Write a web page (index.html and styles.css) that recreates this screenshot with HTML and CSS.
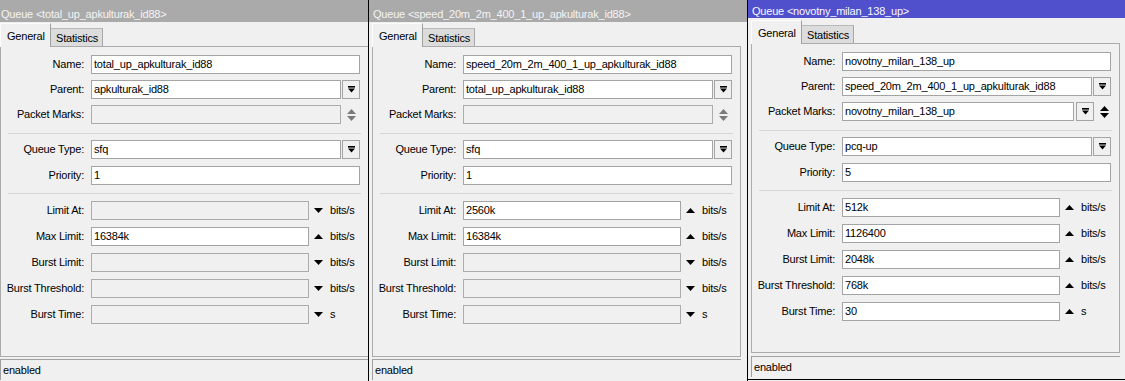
FILE: index.html
```html
<!DOCTYPE html>
<html>
<head>
<meta charset="utf-8">
<link rel="stylesheet" href="styles.css">
</head>
<body>
<div class="desk">

  <section class="win win-a">
    <header class="title">Queue &lt;total_up_apkulturak_id88&gt;</header>
    <nav class="tabs"><span class="tab active">General</span><span class="tab">Statistics</span></nav>
    <div class="panel">
      <div class="grp grp-a">
        <div class="row"><span class="lbl">Name:</span><span class="fld w-full">total_up_apkulturak_id88</span></div>
        <div class="row"><span class="lbl">Parent:</span><span class="fld w-combo">apkulturak_id88</span><span class="btn"><svg width="7" height="7" viewBox="0 0 7 7"><rect x="0" y="0" width="7" height="1.6"/><path d="M0 2.6H7L3.5 6.6Z"/></svg></span></div>
        <div class="row"><span class="lbl">Packet Marks:</span><span class="fld w-combo off"></span><span class="spin gray"><svg width="9" height="12" viewBox="0 0 9 12"><path d="M4.5 0L9 5H0Z"/><path d="M0 7H9L4.5 12Z"/></svg></span></div>
      </div>
      <div class="sep sep-1"></div>
      <div class="grp grp-b">
        <div class="row"><span class="lbl">Queue Type:</span><span class="fld w-combo">sfq</span><span class="btn"><svg width="7" height="7" viewBox="0 0 7 7"><rect x="0" y="0" width="7" height="1.6"/><path d="M0 2.6H7L3.5 6.6Z"/></svg></span></div>
        <div class="row"><span class="lbl">Priority:</span><span class="fld w-full">1</span></div>
      </div>
      <div class="sep sep-2"></div>
      <div class="grp grp-c">
        <div class="row"><span class="lbl">Limit At:</span><span class="fld w-lim off"></span><span class="arr"><svg width="9" height="5" viewBox="0 0 9 5"><path d="M0 0H9L4.5 5Z"/></svg></span><span class="unit">bits/s</span></div>
        <div class="row"><span class="lbl">Max Limit:</span><span class="fld w-lim">16384k</span><span class="arr"><svg width="9" height="5" viewBox="0 0 9 5"><path d="M4.5 0L9 5H0Z"/></svg></span><span class="unit">bits/s</span></div>
        <div class="row"><span class="lbl">Burst Limit:</span><span class="fld w-lim off"></span><span class="arr"><svg width="9" height="5" viewBox="0 0 9 5"><path d="M0 0H9L4.5 5Z"/></svg></span><span class="unit">bits/s</span></div>
        <div class="row"><span class="lbl">Burst Threshold:</span><span class="fld w-lim off"></span><span class="arr"><svg width="9" height="5" viewBox="0 0 9 5"><path d="M0 0H9L4.5 5Z"/></svg></span><span class="unit">bits/s</span></div>
        <div class="row"><span class="lbl">Burst Time:</span><span class="fld w-lim off"></span><span class="arr"><svg width="9" height="5" viewBox="0 0 9 5"><path d="M0 0H9L4.5 5Z"/></svg></span><span class="unit">s</span></div>
      </div>
    </div>
    <div class="status">enabled</div>
  </section>

  <section class="win win-b">
    <header class="title">Queue &lt;speed_20m_2m_400_1_up_apkulturak_id88&gt;</header>
    <nav class="tabs"><span class="tab active">General</span><span class="tab">Statistics</span></nav>
    <div class="panel">
      <div class="grp grp-a">
        <div class="row"><span class="lbl">Name:</span><span class="fld w-full">speed_20m_2m_400_1_up_apkulturak_id88</span></div>
        <div class="row"><span class="lbl">Parent:</span><span class="fld w-combo">total_up_apkulturak_id88</span><span class="btn"><svg width="7" height="7" viewBox="0 0 7 7"><rect x="0" y="0" width="7" height="1.6"/><path d="M0 2.6H7L3.5 6.6Z"/></svg></span></div>
        <div class="row"><span class="lbl">Packet Marks:</span><span class="fld w-combo off"></span><span class="spin gray"><svg width="9" height="12" viewBox="0 0 9 12"><path d="M4.5 0L9 5H0Z"/><path d="M0 7H9L4.5 12Z"/></svg></span></div>
      </div>
      <div class="sep sep-1"></div>
      <div class="grp grp-b">
        <div class="row"><span class="lbl">Queue Type:</span><span class="fld w-combo">sfq</span><span class="btn"><svg width="7" height="7" viewBox="0 0 7 7"><rect x="0" y="0" width="7" height="1.6"/><path d="M0 2.6H7L3.5 6.6Z"/></svg></span></div>
        <div class="row"><span class="lbl">Priority:</span><span class="fld w-full">1</span></div>
      </div>
      <div class="sep sep-2"></div>
      <div class="grp grp-c">
        <div class="row"><span class="lbl">Limit At:</span><span class="fld w-lim">2560k</span><span class="arr"><svg width="9" height="5" viewBox="0 0 9 5"><path d="M4.5 0L9 5H0Z"/></svg></span><span class="unit">bits/s</span></div>
        <div class="row"><span class="lbl">Max Limit:</span><span class="fld w-lim">16384k</span><span class="arr"><svg width="9" height="5" viewBox="0 0 9 5"><path d="M4.5 0L9 5H0Z"/></svg></span><span class="unit">bits/s</span></div>
        <div class="row"><span class="lbl">Burst Limit:</span><span class="fld w-lim off"></span><span class="arr"><svg width="9" height="5" viewBox="0 0 9 5"><path d="M0 0H9L4.5 5Z"/></svg></span><span class="unit">bits/s</span></div>
        <div class="row"><span class="lbl">Burst Threshold:</span><span class="fld w-lim off"></span><span class="arr"><svg width="9" height="5" viewBox="0 0 9 5"><path d="M0 0H9L4.5 5Z"/></svg></span><span class="unit">bits/s</span></div>
        <div class="row"><span class="lbl">Burst Time:</span><span class="fld w-lim off"></span><span class="arr"><svg width="9" height="5" viewBox="0 0 9 5"><path d="M0 0H9L4.5 5Z"/></svg></span><span class="unit">s</span></div>
      </div>
    </div>
    <div class="status">enabled</div>
  </section>

  <section class="win win-c">
    <header class="title">Queue &lt;novotny_milan_138_up&gt;</header>
    <nav class="tabs"><span class="tab active">General</span><span class="tab">Statistics</span></nav>
    <div class="panel">
      <div class="grp grp-a">
        <div class="row"><span class="lbl">Name:</span><span class="fld w-full">novotny_milan_138_up</span></div>
        <div class="row"><span class="lbl">Parent:</span><span class="fld w-combo">speed_20m_2m_400_1_up_apkulturak_id88</span><span class="btn"><svg width="7" height="7" viewBox="0 0 7 7"><rect x="0" y="0" width="7" height="1.6"/><path d="M0 2.6H7L3.5 6.6Z"/></svg></span></div>
        <div class="row"><span class="lbl">Packet Marks:</span><span class="fld w-pm">novotny_milan_138_up</span><span class="btn btn-pm"><svg width="7" height="7" viewBox="0 0 7 7"><rect x="0" y="0" width="7" height="1.6"/><path d="M0 2.6H7L3.5 6.6Z"/></svg></span><span class="spin spin-pm"><svg width="9" height="12" viewBox="0 0 9 12"><path d="M4.5 0L9 5H0Z"/><path d="M0 7H9L4.5 12Z"/></svg></span></div>
      </div>
      <div class="sep sep-1"></div>
      <div class="grp grp-b">
        <div class="row"><span class="lbl">Queue Type:</span><span class="fld w-combo">pcq-up</span><span class="btn"><svg width="7" height="7" viewBox="0 0 7 7"><rect x="0" y="0" width="7" height="1.6"/><path d="M0 2.6H7L3.5 6.6Z"/></svg></span></div>
        <div class="row"><span class="lbl">Priority:</span><span class="fld w-full">5</span></div>
      </div>
      <div class="sep sep-2"></div>
      <div class="grp grp-c">
        <div class="row"><span class="lbl">Limit At:</span><span class="fld w-lim">512k</span><span class="arr"><svg width="9" height="5" viewBox="0 0 9 5"><path d="M4.5 0L9 5H0Z"/></svg></span><span class="unit">bits/s</span></div>
        <div class="row"><span class="lbl">Max Limit:</span><span class="fld w-lim">1126400</span><span class="arr"><svg width="9" height="5" viewBox="0 0 9 5"><path d="M4.5 0L9 5H0Z"/></svg></span><span class="unit">bits/s</span></div>
        <div class="row"><span class="lbl">Burst Limit:</span><span class="fld w-lim">2048k</span><span class="arr"><svg width="9" height="5" viewBox="0 0 9 5"><path d="M4.5 0L9 5H0Z"/></svg></span><span class="unit">bits/s</span></div>
        <div class="row"><span class="lbl">Burst Threshold:</span><span class="fld w-lim">768k</span><span class="arr"><svg width="9" height="5" viewBox="0 0 9 5"><path d="M4.5 0L9 5H0Z"/></svg></span><span class="unit">bits/s</span></div>
        <div class="row"><span class="lbl">Burst Time:</span><span class="fld w-lim">30</span><span class="arr"><svg width="9" height="5" viewBox="0 0 9 5"><path d="M4.5 0L9 5H0Z"/></svg></span><span class="unit">s</span></div>
      </div>
    </div>
    <div class="status">enabled</div>
  </section>

</div>
</body>
</html>
```

FILE: styles.css
```css
* { box-sizing: border-box; }

html, body {
  margin: 0;
  padding: 0;
}

body {
  width: 1125px;
  height: 381px;
  overflow: hidden;
  background: #f0f0f0;
  font-family: "Liberation Sans", Arial, sans-serif;
  font-size: 11px;
  letter-spacing: -0.2px;
  color: #000;
}

.desk {
  position: relative;
  width: 1125px;
  height: 381px;
  overflow: hidden;
}

/* windows on a desktop */
.win {
  position: absolute;
  top: 0;
  width: 380px;
  height: 420px;
  background: #f0f0f0;
  border-left: 1px solid #000;
  border-right: 1px solid #000;
  display: flex;
  flex-direction: column;
}

.win-a { left: -4px; z-index: 1; }
.win-b { left: 368px; z-index: 2; }
.win-c {
  left: 747px;
  z-index: 3;
  height: 380px;
  border-bottom: 1px solid #000;
}

.title {
  flex: none;
  height: 22px;
  padding: 7px 0 0 4px;
  line-height: 15px;
  background: #aaaaaa;
  color: #f4f4f4;
  white-space: nowrap;
  overflow: hidden;
}

.win-c .title {
  height: 18px;
  padding-top: 4px;
  background: #5050cc;
  color: #f8f8ff;
}

.tabs {
  flex: none;
  height: 24px;
  padding-left: 3px;
  display: flex;
  align-items: flex-end;
}

.win-c .tabs { height: 25px; }

.tab {
  height: 18px;
  width: 52px;
  padding: 3px 0 0 5px;
  line-height: 13px;
  background: #dcdcdc;
  border-top: 1px solid #b8b8b8;
  border-right: 1px solid #a8a8a8;
  white-space: nowrap;
}

.tab.active {
  position: relative;
  z-index: 1;
  width: 51px;
  height: 24px;
  margin-bottom: -1px;
  padding: 6px 0 0 6px;
  background: #f0f0f0;
  border-top: 1px solid #fcfcfc;
  border-left: 1px solid #fcfcfc;
  border-right: 1px solid #a0a0a0;
}

.panel {
  flex: none;
  height: 311px;
  margin-left: 3px;
  width: 369px;
  border: 1px solid #ababab;
  padding-top: 8px;
  display: flex;
  flex-direction: column;
}

.win-c .panel { height: 310px; }

.grp {
  display: flex;
  flex-direction: column;
}

.grp-a { gap: 6px; }
.grp-b { gap: 7px; }
.grp-c { gap: 7px; }

.sep {
  height: 1px;
  margin-left: 7px;
  margin-right: 7px;
  background: #d6d6d6;
}

.sep-1 { margin-top: 9px; margin-bottom: 6px; }
.sep-2 { margin-top: 8px; margin-bottom: 7px; }

.row {
  display: flex;
  align-items: center;
  height: 19px;
}

.lbl {
  flex: none;
  width: 83px;
  margin-right: 7px;
  text-align: right;
  line-height: 19px;
  white-space: nowrap;
}

.fld {
  flex: none;
  height: 19px;
  padding-left: 2px;
  line-height: 17px;
  background: #fff;
  border: 1px solid #a4a4a4;
  white-space: nowrap;
  overflow: hidden;
}

.fld.off {
  background: #f0f0f0;
  border-color: #acacac;
}

.w-full { width: 269px; }
.w-combo { width: 250px; }
.w-lim { width: 218px; }
.w-pm { width: 232px; }

.btn {
  flex: none;
  width: 18px;
  height: 19px;
  margin-left: 1px;
  border: 1px solid #a4a4a4;
  background: #f0f0f0;
  display: flex;
  align-items: center;
  justify-content: center;
}

.btn svg { fill: #000; display: block; }

.btn-pm { margin-left: 2px; }

.spin {
  flex: none;
  width: 18px;
  height: 19px;
  margin-left: 1px;
  display: flex;
  align-items: center;
  justify-content: center;
}

.spin svg { display: block; fill: #000; }
.spin.gray svg { fill: #7a7a7a; }
.spin-pm { width: 17px; margin-left: 2px; }

.arr {
  flex: none;
  width: 9px;
  margin-left: 5px;
  display: flex;
  align-items: center;
}

.arr svg { display: block; fill: #000; }

.unit {
  margin-left: 7px;
  line-height: 19px;
  white-space: nowrap;
}

.status {
  flex: none;
  height: 21px;
  margin-top: 2px;
  margin-left: 3px;
  width: 369px;
  padding-left: 2px;
  line-height: 20px;
  border-top: 1px solid #a0a0a0;
  border-left: 1px solid #a0a0a0;
  white-space: nowrap;
}

.win-c .status { margin-top: 3px; }
```
